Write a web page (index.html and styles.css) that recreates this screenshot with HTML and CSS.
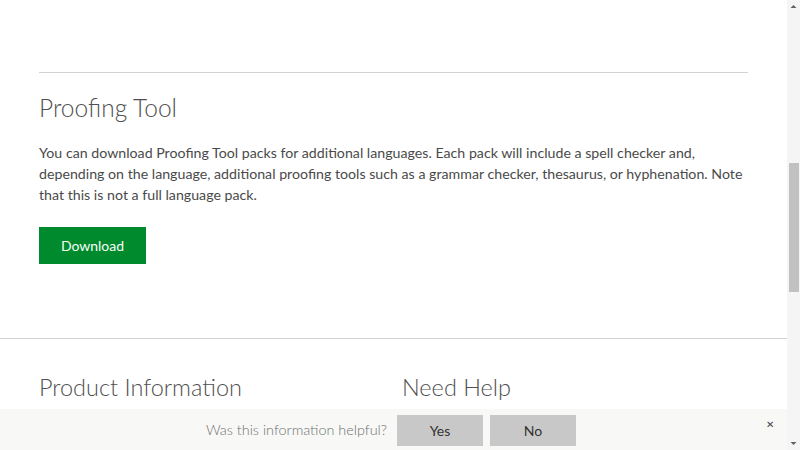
FILE: index.html
```html
<!DOCTYPE html>
<html lang="en">
<head>
<meta charset="utf-8">
<title>Proofing Tool</title>
<link rel="stylesheet" href="styles.css">
</head>
<body>
<div class="window">
  <main class="page">
    <section class="proofing">
      <hr class="rule">
      <h2 class="title">Proofing Tool</h2>
      <p class="desc">You can download Proofing Tool packs for additional languages. Each pack will include a spell checker and, depending on the language, additional proofing tools such as a grammar checker, thesaurus, or hyphenation. Note that this is not a full language pack.</p>
      <a class="btn-download" href="#">Download</a>
    </section>
    <section class="footer-info">
      <div class="col">
        <h2 class="col-title">Product Information</h2>
      </div>
      <div class="col">
        <h2 class="col-title">Need Help</h2>
      </div>
    </section>
    <div class="feedback">
      <span class="fb-text">Was this information helpful?</span>
      <button class="fb-btn">Yes</button>
      <button class="fb-btn">No</button>
      <span class="fb-close">&#x2715;</span>
    </div>
  </main>
  <div class="scrollbar">
    <svg class="arrow" width="13" height="13" viewBox="0 0 13 13"><path d="M3.5 8 L6.5 5 L9.5 8 Z" fill="#606060"/></svg>
    <div class="track"><div class="thumb"></div></div>
    <svg class="arrow" width="13" height="13" viewBox="0 0 13 13"><path d="M3.5 5 L6.5 8 L9.5 5 Z" fill="#606060"/></svg>
  </div>
</div>
</body>
</html>
```
FILE: styles.css
```css
* { box-sizing: border-box; }
html, body { margin: 0; padding: 0; }
body {
  width: 800px;
  height: 450px;
  overflow: hidden;
  background: #fff;
  font-family: Lato, "Open Sans", "Liberation Sans", sans-serif;
  color: #4a4a4a;
}
.window {
  display: flex;
  width: 800px;
  height: 450px;
}
.page {
  position: relative;
  width: 787px;
  height: 450px;
  overflow: hidden;
}
.proofing {
  padding: 72px 39px 0 39px;
  height: 338px;
}
.rule {
  margin: 0;
  border: 0;
  border-top: 1px solid #d2d2d2;
  width: 709px;
}
.title {
  margin: 17px 0 0 0;
  font-weight: 300;
  font-size: 24.5px;
  line-height: 36px;
  color: #505050;
}
.desc {
  margin: 16px 0 0 0;
  font-size: 14.2px;
  line-height: 21px;
  width: 712px;
  color: #4a4a4a;
}
.btn-download {
  display: inline-flex;
  align-items: center;
  justify-content: center;
  margin-top: 22px;
  width: 107px;
  height: 37px;
  background: #008a2e;
  color: #f4fff6;
  font-size: 14px;
  text-decoration: none;
}
.footer-info {
  border-top: 1px solid #d2d2d2;
  display: flex;
  padding: 30px 39px 0 39px;
}
.col { flex: none; width: 363px; }
.col-title {
  margin: 0;
  font-weight: 300;
  font-size: 23.5px;
  line-height: 36px;
  color: #505050;
}
.feedback {
  position: absolute;
  left: 0;
  bottom: 0;
  width: 787px;
  height: 41px;
  background: #f8f8f7;
  display: flex;
  align-items: flex-start;
}
.fb-text {
  margin-left: auto;
  margin-top: 12px;
  font-size: 14.4px;
  font-weight: 300;
  color: #707070;
  margin-right: 10px;
}
.fb-btn {
  width: 86px;
  height: 31px;
  margin-top: 6px;
  border: 0;
  background: #c8c8c8;
  font-family: Lato, "Open Sans", "Liberation Sans", sans-serif;
  font-size: 14px;
  color: #333;
  margin-right: 7px;
  padding: 0;
}
.fb-btn + .fb-btn { margin-right: 211px; }
.fb-close {
  position: absolute;
  right: 13px;
  top: 9px;
  font-size: 10px;
  color: #444;
}
.scrollbar {
  width: 13px;
  height: 450px;
  background: #f5f5f5;
  display: flex;
  flex-direction: column;
}
.arrow { display: block; flex: none; }
.track {
  flex: 1;
  padding-top: 150px;
}
.thumb {
  margin-left: 2px;
  width: 10px;
  height: 129px;
  background: #c1c1c1;
}
```
